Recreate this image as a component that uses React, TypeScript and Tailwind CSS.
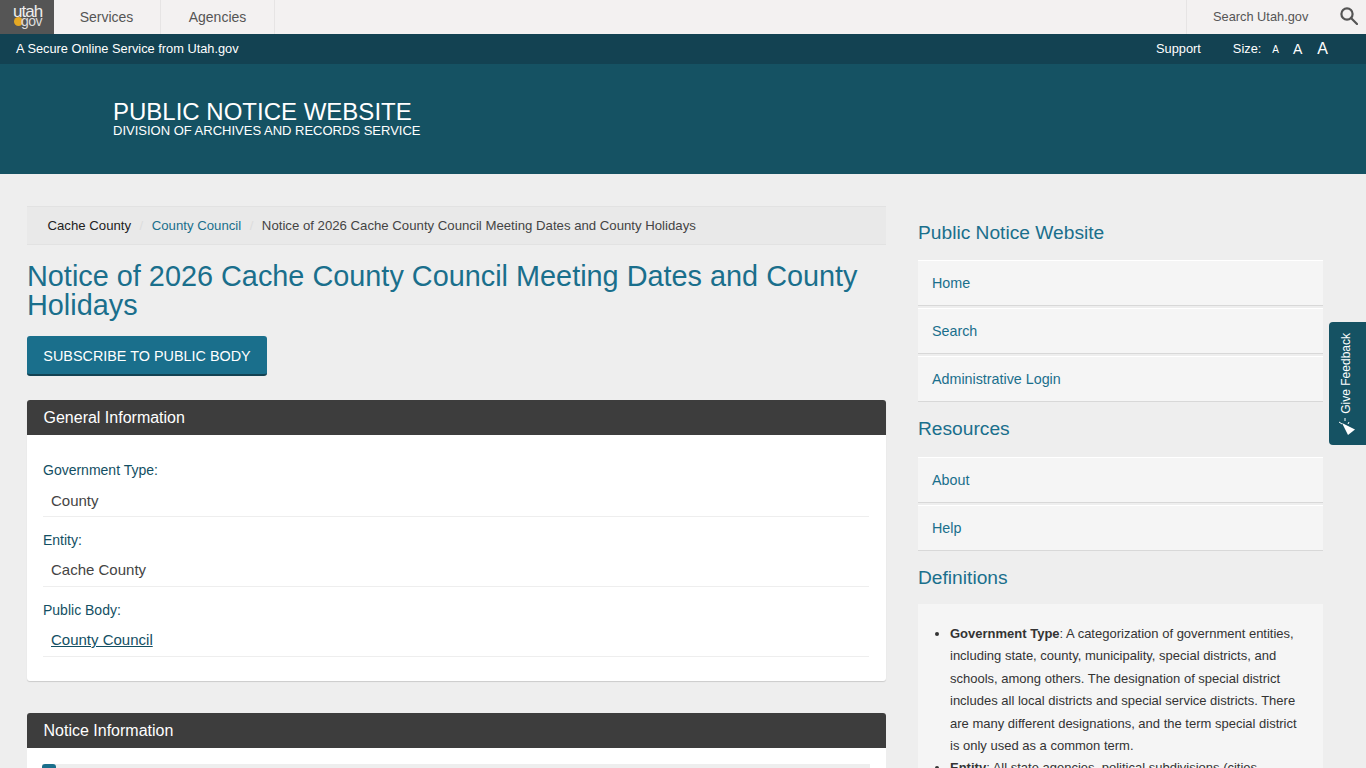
import React from 'react';

const infoRows = [
  { label: 'Government Type:', value: 'County', top: 'pt-[10px]' },
  { label: 'Entity:', value: 'Cache County', top: 'pt-[9px]' },
  { label: 'Public Body:', value: 'County Council', top: 'pt-[9px]', link: true },
];

const SideLink: React.FC<{ label: string }> = ({ label }) => (
  <a className="block h-[46px] mb-[2px] pl-[14px] pt-[12px] bg-[#f5f5f5] border-b border-[#d8d8d8] border-t border-t-white text-[14.3px] leading-[20px] text-[#1a6f8c]">
    {label}
  </a>
);

const SideHeading: React.FC<{ label: string; className: string }> = ({ label, className }) => (
  <h3 className={`text-[19.2px] leading-[24px] text-[#1a6f8c] ${className}`}>{label}</h3>
);

export default function App() {
  return (
    <div className="relative h-screen overflow-hidden bg-[#eeeeee] font-['Liberation_Sans',Arial,sans-serif] text-[#333]">
      {/* Utah.gov top bar */}
      <div className="flex h-[34px] bg-[#f3f1f1] text-[14px] text-[#555]">
        <div className="relative w-[54px] bg-[#555555] text-white">
          <span className="absolute left-[13px] top-[3px] text-[17px] leading-[17px] tracking-[-1px] text-[#eee]">utah</span>
          <span className="absolute left-[14px] top-[17px] h-[9px] w-[9px] rounded-full bg-[#e5a823]" />
          <span className="absolute left-[21px] top-[14px] text-[14px] leading-[14px] tracking-[-0.5px] text-[#ddd]">gov</span>
        </div>
        <div className="flex w-[107px] items-center justify-center border-r border-[#e6e4e4] pr-[1px]">Services</div>
        <div className="flex w-[114px] items-center justify-center border-r border-[#e6e4e4]">Agencies</div>
        <div className="ml-auto flex w-[180px] items-center border-l border-[#e6e4e4] pl-[26px]">
          <span className="text-[12.8px]">Search Utah.gov</span>
          <svg className="ml-[32px] -mt-[2px]" width="18" height="18" viewBox="0 0 18 18" fill="none" stroke="#555" strokeWidth="2.2">
            <circle cx="7" cy="7" r="5.6" />
            <path d="M11 11l6 6" strokeLinecap="round" />
          </svg>
        </div>
      </div>
      <div className="flex h-[30px] items-center bg-[#134252] pl-4 pr-[38px] text-[12.8px] text-white">
        <span>A Secure Online Service from Utah.gov</span>
        <span className="ml-auto">Support</span>
        <span className="ml-[32px]">Size:</span>
        <span className="ml-[11px] text-[10px]">A</span>
        <span className="ml-[14px] text-[14px]">A</span>
        <span className="ml-[15px] text-[16px]">A</span>
      </div>

      {/* Banner */}
      <div className="h-[110px] bg-[#155263] pl-[113px] pt-[35px] text-white">
        <div className="text-[24px] leading-[25px]">PUBLIC NOTICE WEBSITE</div>
        <div className="text-[13px] leading-[14px]">DIVISION OF ARCHIVES AND RECORDS SERVICE</div>
      </div>

      <div className="flex pl-[27px] pt-[32px]">
        {/* Main column */}
        <div className="w-[859px]">
          <div className="flex h-[39px] items-center border-y border-[#e2e2e2] bg-[#e9e9e9] pl-[20.5px] text-[13.2px]">
            <span className="text-[#222]">Cache County</span>
            <span className="mx-[8.5px] text-[#ddd]">/</span>
            <span className="text-[#1a6f8c]">County Council</span>
            <span className="mx-[8.5px] text-[#ddd]">/</span>
            <span className="text-[#444]">Notice of 2026 Cache County Council Meeting Dates and County Holidays</span>
          </div>
          <h1 className="mt-[17px] text-[28.85px] leading-[29px] text-[#1a6f8c]">
            Notice of 2026 Cache County Council Meeting Dates and County Holidays
          </h1>
          <button className="mt-[16px] block h-[40px] w-[240px] rounded-[3px] border-b-2 border-[#134252] bg-[#1a6f8c] pt-[3px] text-[14.4px] text-white">
            SUBSCRIBE TO PUBLIC BODY
          </button>

          <div className="mt-[24px] rounded-[3px] bg-white shadow-[0_1px_1px_rgba(0,0,0,0.15)]">
            <div className="flex h-[35px] items-center rounded-t-[3px] bg-[#3d3d3d] pl-[16.5px] text-[16px] text-white">General Information</div>
            <div className="h-[246px] pl-[16px] pr-[17px] pt-[25px]">
              {infoRows.map((row) => (
                <div key={row.label} className="mb-[13px]">
                  <div className="text-[14px] leading-[20px] text-[#134f63]">{row.label}</div>
                  <div className={`h-[37px] border-b border-[#eeeeee] pl-[8px] text-[15px] leading-[22px] ${row.top} ${row.link ? 'text-[#134f63] underline' : 'text-[#444]'}`}>
                    {row.value}
                  </div>
                </div>
              ))}
            </div>
          </div>

          <div className="mt-[32px] rounded-[3px] bg-white">
            <div className="flex h-[35px] items-center rounded-t-[3px] bg-[#3d3d3d] pl-[16.5px] text-[16px] text-white">Notice Information</div>
            <div className="relative ml-[15px] mr-[16px] mt-[16px] h-[40px] bg-[#eeeeee]">
              <div className="absolute left-0 top-0 h-[40px] w-[14px] rounded-t-[3px] bg-[#1a6f8c]" />
            </div>
          </div>
        </div>

        {/* Sidebar */}
        <div className="ml-[32px] w-[405px]">
          <SideHeading label="Public Notice Website" className="mt-[15px] mb-[15px]" />
          <SideLink label="Home" />
          <SideLink label="Search" />
          <SideLink label="Administrative Login" />
          <SideHeading label="Resources" className="mt-[15px] mb-[16px]" />
          <SideLink label="About" />
          <SideLink label="Help" />
          <SideHeading label="Definitions" className="mt-[15px] mb-[14px]" />
          <div className="bg-[#f5f5f5] pl-[32px] pr-[20px] pt-[19px] text-[13px] leading-[22.4px]">
            <ul className="list-disc">
              <li>
                <b>Government Type</b>: A categorization of government entities, including state, county, municipality, special districts, and schools, among others. The designation of special district includes all local districts and special service districts. There are many different designations, and the term special district is only used as a common term.
              </li>
              <li>
                <b>Entity</b>: All state agencies, political subdivisions (cities, counties, towns)
              </li>
            </ul>
          </div>
        </div>
      </div>

      {/* Feedback tab */}
      <div className="absolute right-0 top-[322px] flex h-[123px] w-[37px] flex-col items-center rounded-l-[4px] bg-[#155263] pr-[3px] text-white">
        <span className="mt-[11px] text-[12px] leading-[14px] [writing-mode:vertical-rl] rotate-180">Give Feedback</span>
        <svg className="mt-[3px]" width="18" height="18" viewBox="0 0 18 18" fill="white">
          <path d="M5 6L18 12.5L11 18Z" />
          <path d="M2 5l3 2M8 1l0 3M12 5l-1 2" stroke="white" strokeWidth="1" />
        </svg>
      </div>
    </div>
  );
}
